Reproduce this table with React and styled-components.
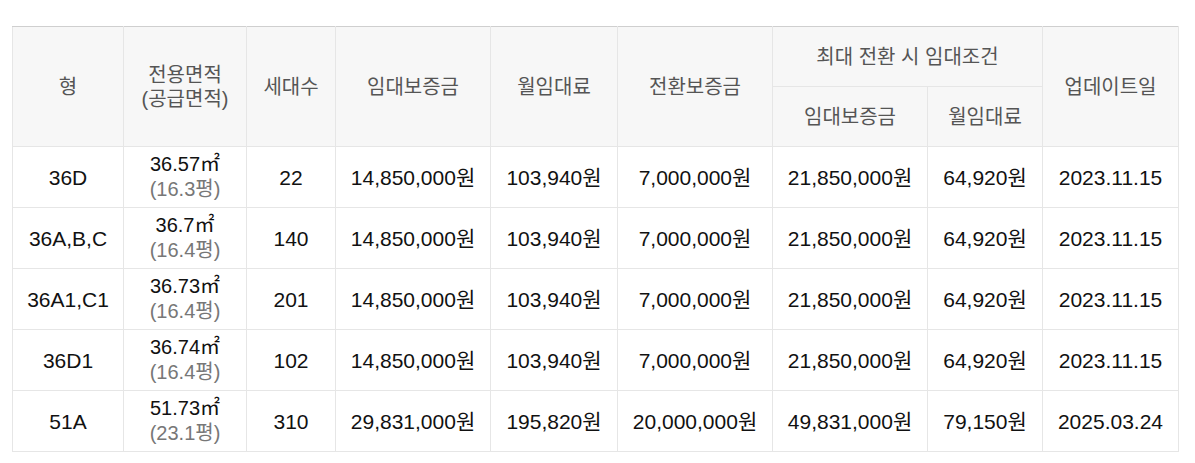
import React from "react";
import styled, { createGlobalStyle } from "styled-components";

const GlobalStyle = createGlobalStyle`
  body {
    margin: 0;
    background: #fff;
    font-family: "Liberation Sans", Arial, "Noto Sans CJK KR", sans-serif;
  }
`;

const Wrap = styled.div`
  padding: 26px 17px 0 12px;
`;

const Table = styled.table`
  width: 1166px;
  table-layout: fixed;
  border-collapse: collapse;
  border-top: 1px solid #cfcfcf;
`;

const Th = styled.th`
  background: #f7f7f7;
  border: 1px solid #e6e6e6;
  border-top: ${p => (p.$top ? "1px solid #cfcfcf" : "1px solid #e6e6e6")};
  color: #555;
  font-weight: normal;
  font-size: 20px;
  line-height: 24px;
  height: ${p => p.$h || 59}px;
  padding: 0;
  text-align: center;
  vertical-align: middle;
`;

const Td = styled.td`
  border: 1px solid #e6e6e6;
  color: #111;
  font-size: ${p => (p.$area ? 20 : 21)}px;
  line-height: 25px;
  height: 60px;
  padding: 0;
  text-align: center;
  vertical-align: middle;
`;

const Sub = styled.span`
  display: block;
  color: #777;
`;

const widths = [111, 123, 89, 155, 127, 155, 155, 115, 136];

const rows = [
  ["36D", "36.57㎡", "16.3평", "22", "14,850,000원", "103,940원", "7,000,000원", "21,850,000원", "64,920원", "2023.11.15"],
  ["36A,B,C", "36.7㎡", "16.4평", "140", "14,850,000원", "103,940원", "7,000,000원", "21,850,000원", "64,920원", "2023.11.15"],
  ["36A1,C1", "36.73㎡", "16.4평", "201", "14,850,000원", "103,940원", "7,000,000원", "21,850,000원", "64,920원", "2023.11.15"],
  ["36D1", "36.74㎡", "16.4평", "102", "14,850,000원", "103,940원", "7,000,000원", "21,850,000원", "64,920원", "2023.11.15"],
  ["51A", "51.73㎡", "23.1평", "310", "29,831,000원", "195,820원", "20,000,000원", "49,831,000원", "79,150원", "2025.03.24"],
];

export default function App() {
  return (
    <Wrap>
      <GlobalStyle />
      <Table>
        <colgroup>
          {widths.map((w, i) => (
            <col key={i} style={{ width: w }} />
          ))}
        </colgroup>
        <thead>
          <tr>
            <Th $top rowSpan={2}>형</Th>
            <Th $top rowSpan={2}>전용면적<br />(공급면적)</Th>
            <Th $top rowSpan={2}>세대수</Th>
            <Th $top rowSpan={2}>임대보증금</Th>
            <Th $top rowSpan={2}>월임대료</Th>
            <Th $top rowSpan={2}>전환보증금</Th>
            <Th $top colSpan={2}>최대 전환 시 임대조건</Th>
            <Th $top rowSpan={2}>업데이트일</Th>
          </tr>
          <tr>
            <Th>임대보증금</Th>
            <Th>월임대료</Th>
          </tr>
        </thead>
        <tbody>
          {rows.map((r, i) => (
            <tr key={i}>
              <Td>{r[0]}</Td>
              <Td $area>
                {r[1]}
                <Sub>({r[2]})</Sub>
              </Td>
              {r.slice(3).map((c, j) => (
                <Td key={j}>{c}</Td>
              ))}
            </tr>
          ))}
        </tbody>
      </Table>
    </Wrap>
  );
}
